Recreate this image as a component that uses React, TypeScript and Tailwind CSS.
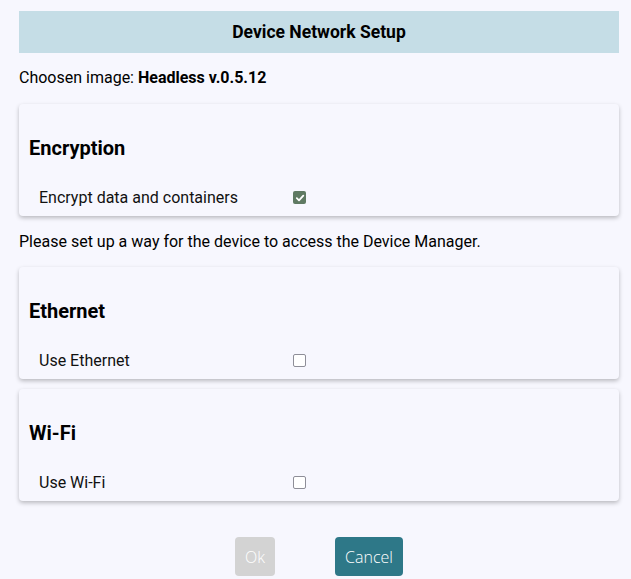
import React from "react";

function Check({ checked }: { checked?: boolean }) {
  if (checked) {
    return (
      <span className="ml-[4px] flex h-[13px] w-[13px] items-center justify-center rounded-[2px] bg-[#5f7a63]">
        <svg width="10" height="10" viewBox="0 0 10 10" fill="none">
          <path d="M1.8 5.2 L4 7.3 L8.3 2.6" stroke="white" strokeWidth="1.8" strokeLinecap="round" strokeLinejoin="round" />
        </svg>
      </span>
    );
  }
  return (
    <span className="ml-[4px] h-[13px] w-[13px] rounded-[2px] border border-[#8e8e98] bg-white" />
  );
}

function Card({ title, label, checked }: { title: string; label: string; checked?: boolean }) {
  return (
    <div className="rounded-[4px] bg-[#f7f7fe] pt-[33px] pb-[9px] shadow-[0_2px_4px_rgba(0,0,0,0.25)]">
      <h3 className="ml-[10px] text-[20px] font-bold leading-[23px] text-black">{title}</h3>
      <div className="mt-[28px] flex items-center pl-[20px]">
        <span className="w-[250px] text-[16px] leading-[19px] text-[#111]">{label}</span>
        <Check checked={checked} />
      </div>
    </div>
  );
}

export default function App() {
  return (
    <div
      className="min-h-[579px] w-[631px] bg-[#f7f7fe] pt-[11px] text-black"
      style={{ fontFamily: "Roboto, 'Liberation Sans', sans-serif" }}
    >
      <div className="ml-[19px] w-[600px]">
        <div className="flex h-[42px] items-center justify-center bg-[#c5dde6] text-[17.5px] font-bold">
          Device Network Setup
        </div>
        <p className="mt-[15px] text-[16px] leading-[19px]">
          Choosen image: <b>Headless v.0.5.12</b>
        </p>
        <div className="mt-[17px]">
          <Card title="Encryption" label="Encrypt data and containers" checked />
        </div>
        <p className="mt-[16px] text-[16px] leading-[19px]">
          Please set up a way for the device to access the Device Manager.
        </p>
        <div className="mt-[16px] flex flex-col gap-[10px]">
          <Card title="Ethernet" label="Use Ethernet" />
          <Card title="Wi-Fi" label="Use Wi-Fi" />
        </div>
        <div
          className="mt-[36px] flex justify-center gap-[60px] text-[16px]"
          style={{ fontFamily: "'Open Sans', sans-serif" }}
        >
          <button className="h-[39px] w-[40px] rounded-[4px] bg-[#d3d3d3] font-light text-white">Ok</button>
          <button className="h-[39px] w-[68px] rounded-[4px] bg-[#2e7888] font-light text-white">Cancel</button>
        </div>
      </div>
    </div>
  );
}
